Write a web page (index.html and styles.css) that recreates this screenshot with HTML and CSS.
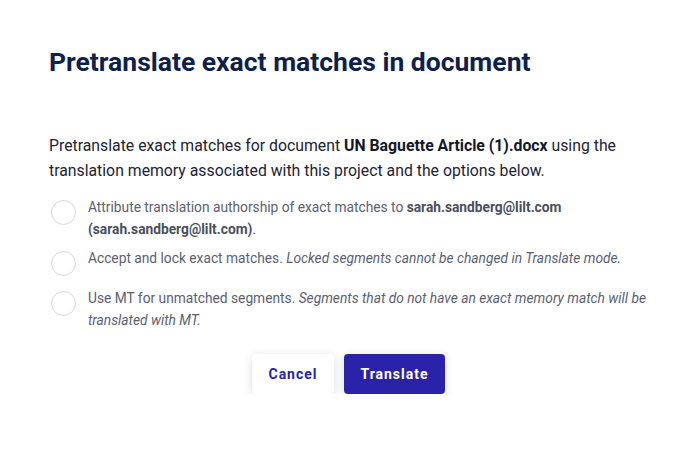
FILE: index.html
```html
<!DOCTYPE html>
<html lang="en">
<head>
    <meta charset="UTF-8">
    <meta name="viewport" content="width=device-width, initial-scale=1.0">
    <title>Pretranslate</title>
    <link rel="stylesheet" href="styles.css">
</head>
<body>
    <div class="modal">
        <h2 class="modal-title">Pretranslate exact matches in document</h2>
        <p class="intro">Pretranslate exact matches for document <b>UN Baguette Article (1).docx</b> using the translation memory associated with this project and the options below.</p>
        <div class="options">
            <label class="option">
                <span class="radio"></span>
                <span class="option-text">Attribute translation authorship of exact matches to <b>sarah.sandberg@lilt.com (sarah.sandberg@lilt.com)</b>.</span>
            </label>
            <label class="option">
                <span class="radio"></span>
                <span class="option-text">Accept and lock exact matches. <i>Locked segments cannot be changed in Translate mode.</i></span>
            </label>
            <label class="option">
                <span class="radio"></span>
                <span class="option-text">Use MT for unmatched segments. <i>Segments that do not have an exact memory match will be translated with MT.</i></span>
            </label>
        </div>
        <div class="buttons">
            <button class="btn btn-cancel">Cancel</button>
            <button class="btn btn-primary">Translate</button>
        </div>
    </div>
</body>
</html>
```

FILE: styles.css
```css
/* modal dialog */
body {
    font-family: Roboto, "Liberation Sans", sans-serif;
    margin: 0;
    padding: 0;
    background-color: #fff;
}
.modal {
    padding: 45px 49px 0 49px;
}
.modal-title {
    margin: 0;
    font-size: 26.5px;
    font-weight: bold;
    color: #0f1f4b;
    line-height: 34px;
}
.intro {
    margin: 54px 0 0 0;
    font-size: 15.8px;
    line-height: 25px;
    color: #1e2332;
}
.intro b {
    color: #111827;
}
.options {
    margin-top: 13px;
    display: flex;
    flex-direction: column;
    gap: 7px;
}
.option {
    display: flex;
    align-items: flex-start;
    gap: 12px;
}
.radio {
    width: 23px;
    height: 23px;
    border: 1px solid #d5d7dc;
    border-radius: 50%;
    flex-shrink: 0;
    margin: 4px 0 4px 2px;
}
.option-text {
    font-size: 13.75px;
    line-height: 22px;
    color: #5b6170;
}
.option-text b {
    color: #4a4f5c;
}
.buttons {
    display: flex;
    justify-content: center;
    gap: 10px;
    margin-top: 23px;
}
.btn {
    height: 40px;
    border: none;
    border-radius: 4px;
    font-family: inherit;
    font-size: 14px;
    font-weight: bold;
    letter-spacing: 1px;
    padding: 0;
    cursor: pointer;
}
.btn-cancel {
    background-color: #fff;
    color: #2b23a8;
    width: 82px;
    box-shadow: 0 2px 10px rgba(30, 40, 90, 0.15);
}
.btn-primary {
    background-color: #2a22a9;
    color: #fff;
    width: 101px;
    box-shadow: 0 2px 10px rgba(30, 40, 90, 0.15);
}
```
